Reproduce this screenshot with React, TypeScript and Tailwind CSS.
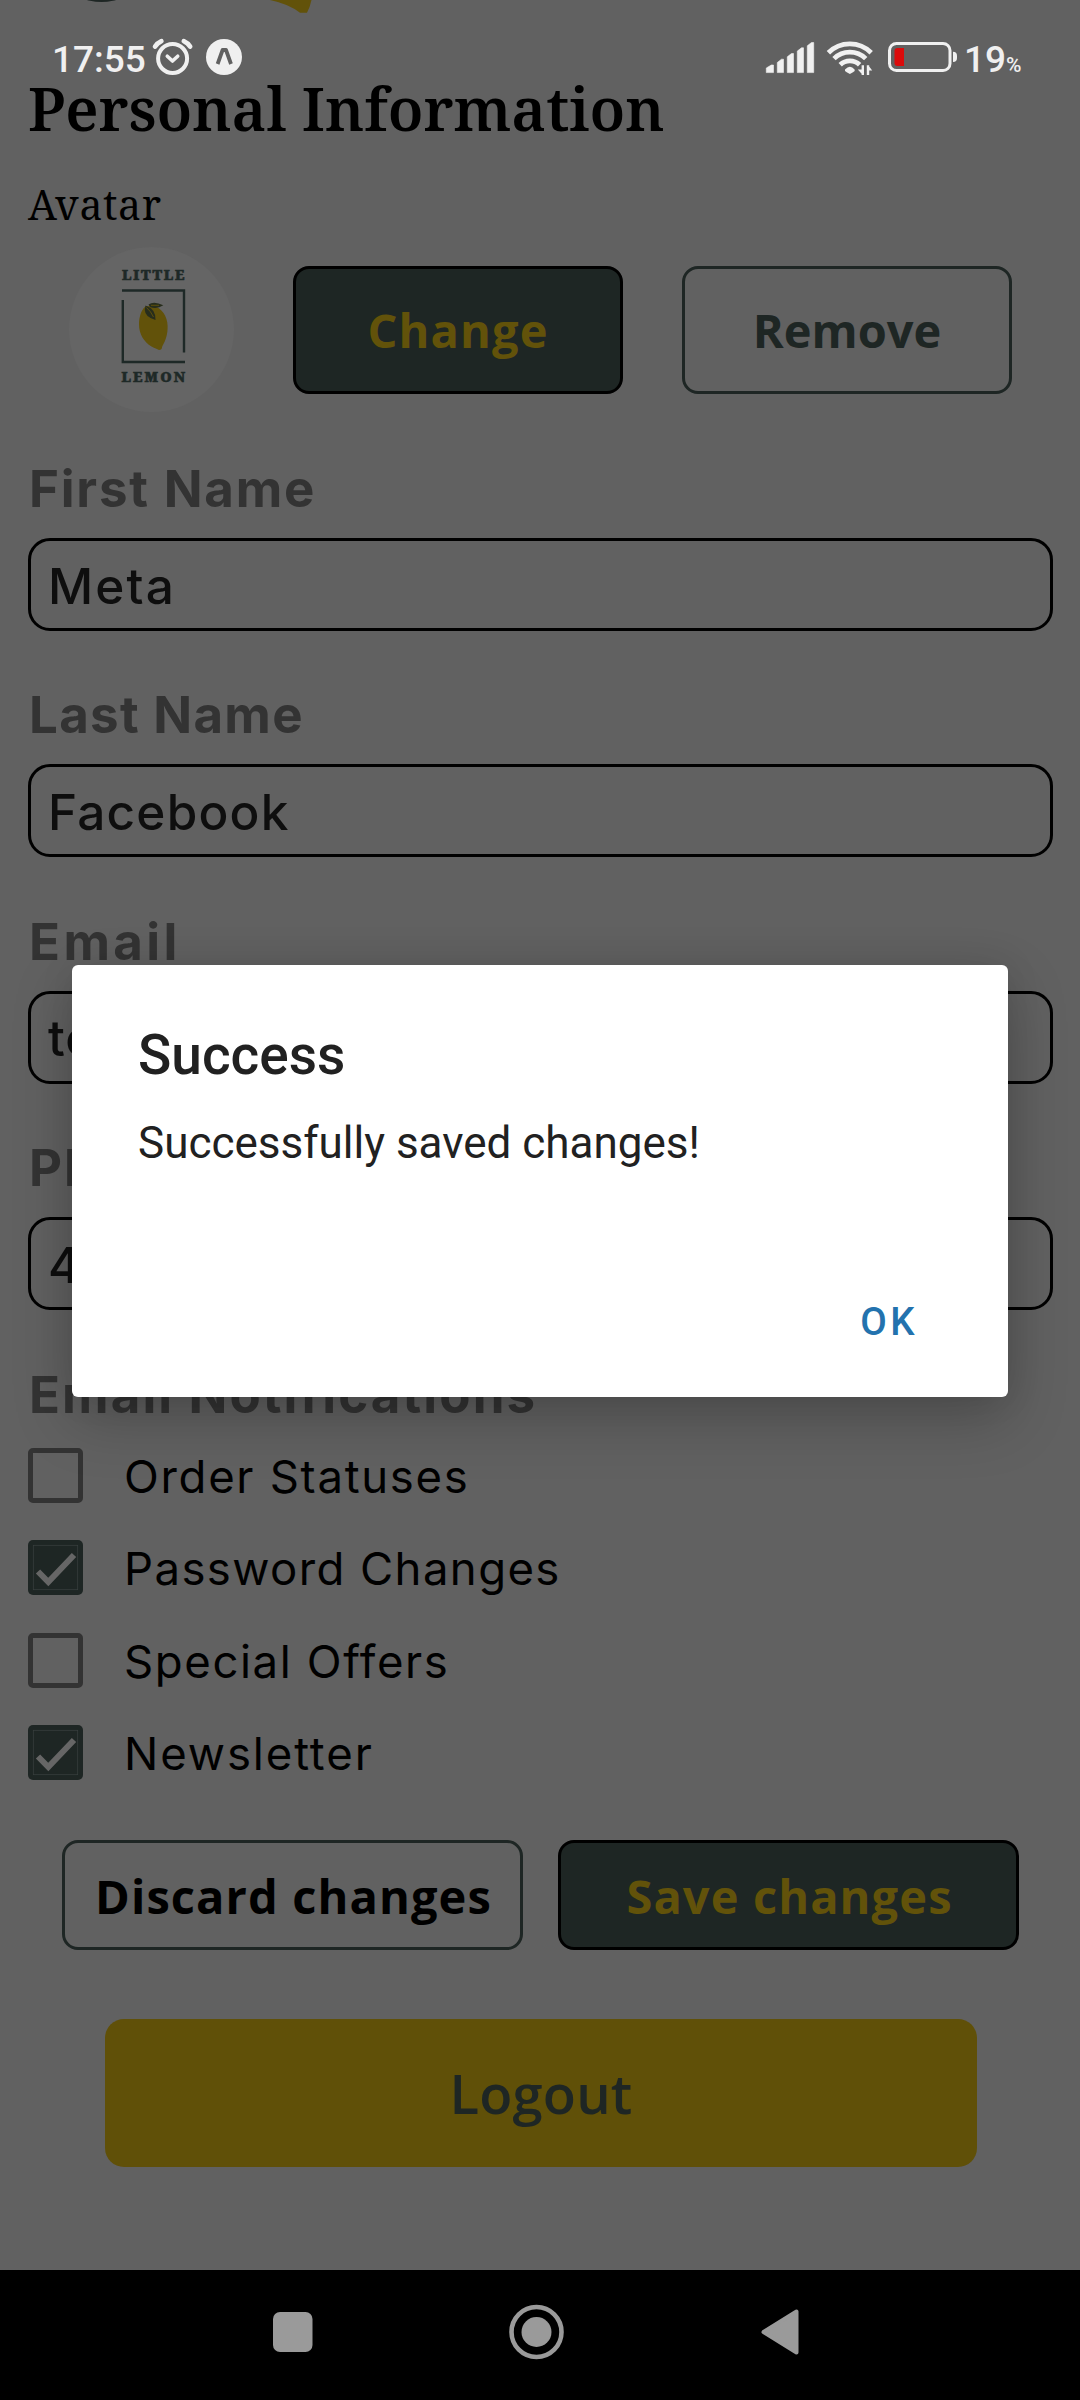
import React from "react";

function StatusBar() {
  return (
    <div className="absolute left-0 top-[34px] z-10 flex h-[51px] w-[1080px] items-center pl-[52px] font-['Roboto',sans-serif] font-medium text-[#f0f0f0]">
      <span className="w-[98px] whitespace-nowrap text-[37px] leading-[51px]">17:55</span>
      <svg className="shrink-0" width="95" height="51" viewBox="150 34 95 51" fill="none">
        <circle cx="172.6" cy="58.5" r="14.5" stroke="#f0f0f0" strokeWidth="4" />
        <path d="M167.3 56.2l5.2 4.8 5.2-4.8" stroke="#f0f0f0" strokeWidth="3.6" strokeLinecap="round" strokeLinejoin="round" />
        <path d="M155 46.6Q157.4 43 161.4 41.2M190.2 46.6Q187.8 43 183.8 41.2" stroke="#f0f0f0" strokeWidth="4.6" strokeLinecap="round" />
        <circle cx="224" cy="57" r="18" fill="#f0f0f0" />
        <path d="M217.6 64L222.6 50H226L231 64" stroke="#616161" strokeWidth="3.8" strokeLinejoin="round" />
      </svg>
      <svg className="ml-[517px] shrink-0" width="200" height="51" viewBox="762 34 200 51" fill="none">
        <g fill="#f0f0f0">
          <path
            d="M766.3 68l5-3h2.2v7.6h-7.2zM777.3 62.5l4.2-3.3h2v13.4h-6.2zM787.3 56.8l4.2-3.3h2v19.1h-6.2zM797.3 51.1l4.2-3.3h2v24.8h-6.2zM807.3 45.8l4.2-3.3h2.2v30.1h-6.4z"
            stroke="#f0f0f0"
            strokeWidth=".6"
            strokeLinejoin="round"
          />
          <path d="M845 69.5q5-5.4 9.6 0l.1 1.5q-1 .8-4.8 3.1-3.9-2.3-4.9-3.1z" />
        </g>
        <g stroke="#f0f0f0" strokeWidth="4.8">
          <path d="M828.4 52.8A30.2 30.2 0 0 1 871.2 52.8" />
          <path d="M834 58.6A22.7 22.7 0 0 1 865.7 58.6" />
          <path d="M840.2 64.8A14 14 0 0 1 859.6 64.8" />
        </g>
        <path d="M864 65.2V75H861.6V73.8L857.8 69.6H861.6V65.2zM866.8 75V65.2H869.2V66.4L872.2 70.4H869.2V75z" fill="#f0f0f0" />
        <rect x="889.5" y="43.5" width="60.5" height="27" rx="7" stroke="#f0f0f0" strokeWidth="3" />
        <path d="M897.5 48H904V66H897.5Q894.5 66 894.5 63V51Q894.5 48 897.5 48z" fill="#db0b0b" />
        <path d="M953 51.7q4 0 4 4v2.3q0 4-4 4z" fill="#f0f0f0" />
      </svg>
      <span className="ml-[2px] flex items-baseline">
        <span className="text-[37px] leading-[51px]">19</span>
        <span className="text-[21px]">%</span>
      </span>
    </div>
  );
}

function AvatarLogo() {
  return (
    <svg className="size-[165px] shrink-0" viewBox="69 247 165 165" fill="none">
      <circle cx="151.5" cy="329.5" r="82.5" fill="#656565" />
      <g
        fill="#1e2927"
        stroke="#1e2927"
        strokeWidth=".5"
        fontFamily="'Noto Serif','DejaVu Serif',serif"
        fontWeight="900"
        fontSize="14"
      >
        <text x="122" y="280.3" textLength="62.5" lengthAdjust="spacing">LITTLE</text>
        <text x="121.5" y="382.3" textLength="63.5" lengthAdjust="spacing">LEMON</text>
      </g>
      <path d="M122 290.5H184V352.5M122.8 300V362H185" stroke="#1e2927" strokeWidth="2.4" />
      <path
        d="M146.5 306C142 308 139 316 139 324.5C139 334 144 342 151.5 346.5C155 348.3 157 348.8 159 350Q162 350 162.2 346.5C166 340 167.8 334 167.6 326C167.6 316 161 308 155 306.5Z"
        fill="#62520a"
      />
      <path d="M148.5 304.5Q154 300.5 163.3 305.3Q157 309.5 150 307Z" fill="#272d1c" />
      <path d="M145.5 305.5Q156 309 155.5 320Q145 317 144.8 310Z" fill="#272d1c" />
      <path d="M146.5 307.5Q151 311.5 153.5 317M151 305.3H159" stroke="#62520a" strokeWidth=".9" />
    </svg>
  );
}

type FieldProps = { label: string; labelSpacing: string; value: string; spacing: string };

function Field({ label, labelSpacing, value, spacing }: FieldProps) {
  return (
    <div>
      <div className="pl-[1px] text-[51px] font-bold leading-[60px] text-[#333]">
        <span className={labelSpacing}>{label}</span>
      </div>
      <div className="mt-[19px] flex h-[93px] items-center rounded-[22px] border-[3px] border-black pl-[17px] pt-[2px] text-[49.5px] font-[450] leading-[60px] text-[#0e0e0e]">
        <span className={spacing}>{value}</span>
      </div>
    </div>
  );
}

type OptionProps = { label: string; checked: boolean; spacing: string };

function Option({ label, checked, spacing }: OptionProps) {
  return (
    <div className="flex h-[55px] items-center gap-[41px]">
      {checked ? (
        <svg className="size-[55px] shrink-0" viewBox="0 0 55 55" fill="none">
          <rect width="55" height="55" rx="5" fill="#1e2624" />
          <rect x="5.3" y="5.3" width="44.4" height="44.4" stroke="#3a403f" strokeWidth=".7" />
          <path d="M10 31.5L20.3 42L46 15" stroke="#666" strokeWidth="6" />
        </svg>
      ) : (
        <div className="size-[55px] shrink-0 rounded-[5px] border-[5px] border-[#333]" />
      )}
      <span className="pt-[2px] text-[45.5px] font-[440] leading-[55px] text-black">
        <span className={spacing}>{label}</span>
      </span>
    </div>
  );
}

const fields: FieldProps[] = [
  { label: "First Name", labelSpacing: "tracking-[1.8px]", value: "Meta", spacing: "tracking-[2.1px]" },
  { label: "Last Name", labelSpacing: "tracking-[1.3px]", value: "Facebook", spacing: "tracking-[1.2px]" },
  { label: "Email", labelSpacing: "tracking-[3.4px]", value: "te", spacing: "tracking-[1px]" },
  { label: "Ph", labelSpacing: "tracking-[2px]", value: "4", spacing: "tracking-[1px]" },
];

const options: OptionProps[] = [
  { label: "Order Statuses", checked: false, spacing: "tracking-[1.7px]" },
  { label: "Password Changes", checked: true, spacing: "tracking-[1.4px]" },
  { label: "Special Offers", checked: false, spacing: "tracking-[1.6px]" },
  { label: "Newsletter", checked: true, spacing: "tracking-[1.9px]" },
];

function Dialog() {
  return (
    <div className="absolute left-[72px] top-[965px] z-20 flex h-[432px] w-[936px] flex-col rounded-[6px] bg-white pl-[66px] pr-[90px] pt-[58px] font-['Roboto',sans-serif] text-[#212121] shadow-[0_22px_60px_rgba(0,0,0,0.22),0_0_36px_rgba(0,0,0,0.08)]">
      <div className="text-[55px] font-medium leading-[64px]">Success</div>
      <div className="mt-[30px] text-[44px] leading-[52px]">Successfully saved changes!</div>
      <div className="mt-[130px] text-right text-[38.5px] font-medium leading-[46px] tracking-[3.4px] text-[#2372ae]">OK</div>
    </div>
  );
}

const buttonBase =
  "flex items-center justify-center rounded-[16px] border-[3px] pt-[2px] font-['Open_Sans',sans-serif] text-[47px] font-[660] whitespace-nowrap";

export default function App() {
  return (
    <div className="relative flex h-[2400px] w-[1080px] flex-col overflow-hidden bg-[#616161] font-['Inter',sans-serif]">
      <svg className="absolute left-0 top-0" width="330" height="14" viewBox="0 0 330 14">
        <ellipse cx="101.5" cy="-14" rx="30" ry="16" fill="#1e2624" />
        <path d="M270 0Q289 4 300 12.8H307Q310 7 311.5 0Z" fill="#62520a" />
      </svg>
      <StatusBar />

      <main className="h-[2270px] pl-[28px] pr-[27px] pt-[68px]">
        <h1 className="whitespace-nowrap font-['Noto_Serif','DejaVu_Serif_Condensed',serif] text-[59.7px] font-semibold leading-[80px] tracking-[-0.05px] text-black">
          Personal Information
        </h1>
        <h2 className="mt-[28px] font-['Noto_Serif','DejaVu_Serif_Condensed',serif] text-[41px] leading-[56px] tracking-[0.6px] text-black">
          Avatar
        </h2>

        <div className="mt-[15px] flex items-center gap-[59px] pl-[41px]">
          <AvatarLogo />
          <div className={buttonBase + " h-[128px] w-[330px] border-black bg-[#1e2624] tracking-[1.1px] text-[#62520a]"}>Change</div>
          <div className={buttonBase + " h-[128px] w-[330px] border-[#1e2624] tracking-[0px] text-[#1e2624]"}>Remove</div>
        </div>

        <div className="mt-[47px] flex flex-col gap-[54.4px]">
          {fields.map((f) => (
            <Field key={f.label} {...f} />
          ))}
          <div className="pl-[1px] text-[51px] font-bold leading-[60px] tracking-[2.1px] text-[#333]">Email Notifications</div>
        </div>

        <div className="mt-[23.4px] flex flex-col gap-[37.3px]">
          {options.map((o) => (
            <Option key={o.label} {...o} />
          ))}
        </div>

        <div className="mt-[60px] flex gap-[35px] pl-[34px]">
          <div className={buttonBase + " h-[110px] w-[461px] border-[#1e2624] pl-[2px] tracking-[1.1px] text-black"}>Discard changes</div>
          <div className={buttonBase + " h-[110px] w-[461px] border-black bg-[#1e2624] pl-[2px] tracking-[1.1px] text-[#62520a]"}>Save changes</div>
        </div>

        <div className="ml-[77px] mt-[69px] flex h-[148px] w-[872px] items-center justify-center rounded-[19px] bg-[#605008] pt-[2px] font-['Open_Sans',sans-serif] text-[54.3px] font-[640] tracking-[0.2px] text-[#1e2624]">
          Logout
        </div>
      </main>

      <Dialog />

      <nav className="flex h-[130px] items-center bg-black pb-[6px] pl-[262.5px]">
        <div className="flex w-[547.5px] items-center justify-between">
          <svg width="60" height="60" viewBox="0 0 60 60" fill="#9a9a9a">
            <rect x="10" y="10" width="39.5" height="40" rx="7" />
          </svg>
          <svg width="60" height="60" viewBox="0 0 60 60">
            <circle cx="30.5" cy="30" r="25" fill="none" stroke="#9a9a9a" strokeWidth="4.6" />
            <circle cx="30.5" cy="30" r="15" fill="#9a9a9a" />
          </svg>
          <svg width="60" height="60" viewBox="0 0 60 60" fill="#9a9a9a" stroke="#9a9a9a" strokeWidth="4" strokeLinejoin="round">
            <path d="M13.5 30L46.5 9.5V50.5Z" />
          </svg>
        </div>
      </nav>
    </div>
  );
}
